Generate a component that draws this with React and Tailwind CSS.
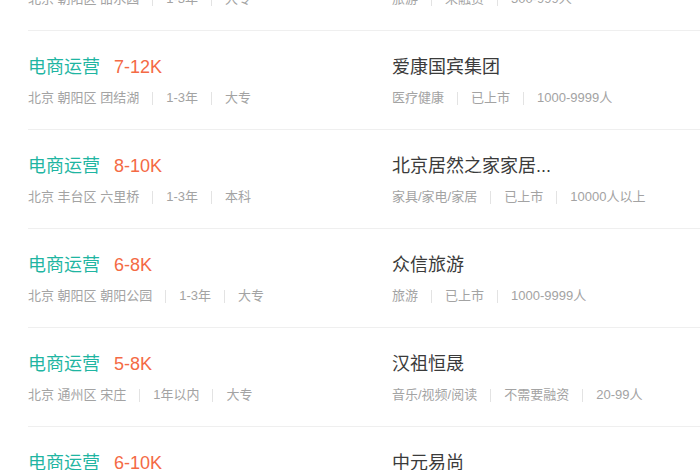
import React from 'react';

// 职位列表（截图里第一条和最后一条只露出一半）
const jobs = [
    { title: '电商运营', salary: '6-8K', meta: ['北京 朝阳区 甜水园', '1-3年', '大专'], company: '途牛旅游网', info: ['旅游', '未融资', '500-999人'] },
    { title: '电商运营', salary: '7-12K', meta: ['北京 朝阳区 团结湖', '1-3年', '大专'], company: '爱康国宾集团', info: ['医疗健康', '已上市', '1000-9999人'] },
    { title: '电商运营', salary: '8-10K', meta: ['北京 丰台区 六里桥', '1-3年', '本科'], company: '北京居然之家家居...', info: ['家具/家电/家居', '已上市', '10000人以上'] },
    { title: '电商运营', salary: '6-8K', meta: ['北京 朝阳区 朝阳公园', '1-3年', '大专'], company: '众信旅游', info: ['旅游', '已上市', '1000-9999人'] },
    { title: '电商运营', salary: '5-8K', meta: ['北京 通州区 宋庄', '1年以内', '大专'], company: '汉祖恒晟', info: ['音乐/视频/阅读', '不需要融资', '20-99人'] },
    { title: '电商运营', salary: '6-10K', meta: ['北京 朝阳区 望京', '1-3年', '本科'], company: '中元易尚', info: ['服装', '未融资', '50-150人'] },
];

const MetaLine = ({ items }) => (
    <div className="flex items-center h-5 text-[13px] leading-5 text-[#a3a3a3]">
        {items.map((item, i) => (
            <React.Fragment key={i}>
                {i > 0 && <span className="mx-[13px] h-[13px] w-px bg-[#e3e3e3]" />}
                <span>{item}</span>
            </React.Fragment>
        ))}
    </div>
);

export default function App() {
    return (
        <div className="w-[700px] h-[470px] overflow-hidden bg-white" style={{ fontFamily: '"Liberation Sans", "Noto Sans CJK SC", sans-serif' }}>
            <div className="-mt-[68px] pl-[28px]">
                {jobs.map((job, index) => (
                    <div key={index} className={`grid grid-cols-[364px_1fr] pt-[23px] pb-[21px] ${index > 0 ? 'border-t border-[#efefef]' : ''}`}>
                        <div>
                            <div className="flex items-center h-[26px] leading-[26px]">
                                <span className="text-[18px] text-[#1fb5a2]">{job.title}</span>
                                <span className="ml-[14px] text-[18px] text-[#f46a45]">{job.salary}</span>
                            </div>
                            <div className="mt-2">
                                <MetaLine items={job.meta} />
                            </div>
                        </div>
                        <div>
                            <div className="h-[26px] leading-[26px] text-[18px] text-[#3b3b3b]">{job.company}</div>
                            <div className="mt-2">
                                <MetaLine items={job.info} />
                            </div>
                        </div>
                    </div>
                ))}
            </div>
        </div>
    );
}
